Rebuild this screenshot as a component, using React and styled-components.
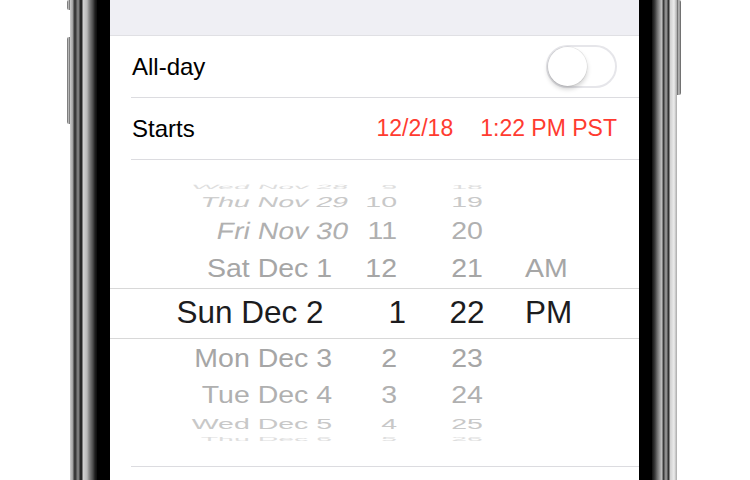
import React from 'react';
import styled, { createGlobalStyle } from 'styled-components';

const GlobalStyle = createGlobalStyle`
  html, body {
    margin: 0;
    padding: 0;
    background: #fff;
  }
  body {
    width: 750px;
    height: 480px;
    overflow: hidden;
    font-family: "Liberation Sans", Arial, sans-serif;
  }
`;

const Stage = styled.div`
  display: flex;
  height: 480px;
  padding-left: 67px;
  overflow: hidden;
`;

const Rail = styled.div`
  width: ${p => p.$w}px;
  display: flex;
  flex-direction: column;
  gap: ${p => p.$gap || 0}px;
`;

const SideButton = styled.div`
  height: ${p => p.$h}px;
  background: linear-gradient(90deg, #5c5c5c, #bdbdbd 45%, #8a8a8a 80%, #4a4a4a);
  border-radius: ${p => (p.$right ? '0 2px 2px 0' : '2px 0 0 2px')};
`;

const FrameLeft = styled.div`
  width: 27px;
  background: linear-gradient(
    90deg,
    #cfcfcf 0px,
    #9c9c9c 3px,
    #3a3a3a 4px,
    #3a3a3a 6px,
    #7c7c7c 7px,
    #7c7c7c 9px,
    #262626 10px,
    #262626 12px,
    #d2d2d2 13px,
    #b8b8b8 17px,
    #8a8a8a 19px,
    #4a4a4a 23px,
    #1e1e1e 25px,
    #0d0d0d 27px
  );
`;

const FrameRight = styled.div`
  width: 25px;
  background: linear-gradient(
    90deg,
    #101010 0px,
    #3d3d3d 3px,
    #6a6a6a 5px,
    #c7c7c7 10px,
    #3a3a3a 11px,
    #3a3a3a 12px,
    #8d8d8d 13px,
    #8d8d8d 15px,
    #303030 16px,
    #303030 17px,
    #cfcfcf 18px,
    #ececec 22px,
    #a9a9a9 25px
  );
`;

const Bezel = styled.div`
  width: 13px;
  background: #000;
`;

const Screen = styled.div`
  width: 529px;
  background: #fff;
  display: flex;
  flex-direction: column;
`;

const TopBar = styled.div`
  height: 35px;
  flex-shrink: 0;
  background: #efeff4;
  border-bottom: 1px solid #e0e0e4;
`;

const Cell = styled.div`
  flex-shrink: 0;
  margin-left: 21px;
  padding: 0 22px 0 1px;
  height: 61px;
  border-bottom: 1px solid #dcdce0;
  display: flex;
  align-items: center;
  justify-content: space-between;
`;

const Label = styled.span`
  font-size: 24px;
  color: #000;
`;

const Values = styled.div`
  display: flex;
  gap: 27px;
  font-size: 23px;
  color: #ff3b30;
`;

const Toggle = styled.div`
  width: 71px;
  height: 43px;
  box-sizing: border-box;
  border-radius: 22px;
  border: 2px solid #e6e6ea;
  background: #fff;
  display: flex;
  align-items: center;
`;

const Knob = styled.div`
  width: 39px;
  height: 39px;
  border-radius: 50%;
  background: #fff;
  box-shadow: 0 3px 5px rgba(0, 0, 0, 0.2), 0 0 0 0.5px rgba(0, 0, 0, 0.1);
`;

const Picker = styled.div`
  flex-shrink: 0;
  height: 306px;
  display: grid;
`;

const Band = styled.div`
  grid-area: 1 / 1;
  align-self: center;
  height: 51px;
  box-sizing: border-box;
  border-top: 1px solid #d8d8d8;
  border-bottom: 1px solid #d8d8d8;
`;

const Wheel = styled.div`
  grid-area: 1 / 1;
  align-self: center;
  height: 260px;
  overflow: hidden;
  display: flex;
`;

const Column = styled.div`
  display: grid;
  align-items: center;
  justify-items: ${p => p.$align};
  width: ${p => p.$w}px;
  margin-left: ${p => p.$ml || 0}px;
  flex-shrink: 0;
`;

const Item = styled.div`
  grid-area: 1 / 1;
  white-space: nowrap;
  line-height: 1;
  font-size: ${p => (p.$selected ? 31.5 : 28.5)}px;
  color: ${p => p.$color};
  transform: translate(${p => p.$dx}px, ${p => p.$dy}px) scaleY(${p => p.$sy}) skewX(${p => p.$skew}deg);
`;

const Pad = styled.span`
  visibility: hidden;
`;

const Divider = styled.div`
  flex-shrink: 0;
  margin-left: 21px;
  height: 1px;
  background: #dcdce0;
`;

const STEPS = [
  { off: 0, sy: 1, color: '#1c1c1e' },
  { off: 45, sy: 0.93, color: '#a6a6a6' },
  { off: 82, sy: 0.83, color: '#b0b0b0' },
  { off: 111, sy: 0.5, color: '#c8c8c8' },
  { off: 126, sy: 0.22, color: '#dedede' },
];

const dates = [
  ['Wed Nov 28', -4],
  ['Thu Nov 29', -3],
  ['Fri Nov 30', -2],
  ['Sat Dec 1', -1],
  ['Sun Dec 2', 0],
  ['Mon Dec 3', 1],
  ['Tue Dec 4', 2],
  ['Wed Dec 5', 3],
  ['Thu Dec 6', 4],
];
const hours = ['9', '10', '11', '12', '1', '2', '3', '4', '5'];
const minutes = ['18', '19', '20', '21', '22', '23', '24', '25', '26'];
const meridiem = [['AM', -1], ['PM', 0]];

function WheelItem({ k, children, selectedDx = 0, skew = 0 }) {
  const step = STEPS[Math.abs(k)];
  return (
    <Item
      $selected={k === 0}
      $color={step.color}
      $dx={k === 0 ? selectedDx : 0}
      $dy={Math.sign(k) * step.off}
      $sy={step.sy}
      $skew={skew}
    >
      {children}
    </Item>
  );
}

function DatePicker() {
  return (
    <Picker>
      <Band />
      <Wheel>
        <Column $w={238} $align="end">
          {dates.map(([text, k]) => {
            const single = text.split(' ')[2].length === 1;
            const skew = k === -2 || k === -3 ? -10 : k === -4 ? -6 : 0;
            return (
              <WheelItem key={text} k={k} selectedDx={-7} skew={skew}>
                {text}
                {single && <Pad>0</Pad>}
              </WheelItem>
            );
          })}
        </Column>
        <Column $w={49} $align="end">
          {hours.map((h, i) => (
            <WheelItem key={h} k={i - 4} selectedDx={9}>
              {h}
            </WheelItem>
          ))}
        </Column>
        <Column $w={100} $ml={20} $align="center">
          {minutes.map((m, i) => (
            <WheelItem key={m} k={i - 4}>
              {m}
            </WheelItem>
          ))}
        </Column>
        <Column $w={80} $ml={8} $align="start">
          {meridiem.map(([m, k]) => (
            <WheelItem key={m} k={k}>
              {m}
            </WheelItem>
          ))}
        </Column>
      </Wheel>
    </Picker>
  );
}

export default function App() {
  return (
    <>
      <GlobalStyle />
      <Stage>
        <Rail $w={3} $gap={27}>
          <SideButton $h={10} />
          <SideButton $h={87} />
        </Rail>
        <FrameLeft />
        <Bezel />
        <Screen>
          <TopBar />
          <Cell>
            <Label>All-day</Label>
            <Toggle>
              <Knob />
            </Toggle>
          </Cell>
          <Cell>
            <Label>Starts</Label>
            <Values>
              <span>12/2/18</span>
              <span>1:22 PM PST</span>
            </Values>
          </Cell>
          <DatePicker />
          <Divider />
        </Screen>
        <Bezel />
        <FrameRight />
        <Rail $w={4}>
          <SideButton $h={95} $right />
        </Rail>
      </Stage>
    </>
  );
}
